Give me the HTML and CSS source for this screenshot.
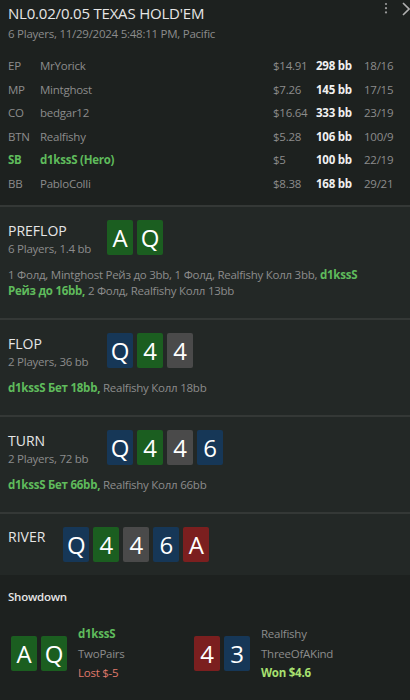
FILE: index.html
```html
<!DOCTYPE html>
<html lang="ru">
<head>
  <meta charset="UTF-8" />
  <meta name="viewport" content="width=device-width, initial-scale=1.0"/>
  <title>Hand - NL0.02/0.05</title>
  <link rel="stylesheet" href="styles.css">
</head>
<body>

  <div class="head">
    <div class="head-tools">
      <svg width="4" height="12" viewBox="0 0 4 12"><circle cx="2" cy="2" r="1.1" fill="#9a9a9a"/><circle cx="2" cy="6.2" r="1.1" fill="#9a9a9a"/><circle cx="2" cy="10.4" r="1.1" fill="#9a9a9a"/></svg>
      <svg width="10" height="14" viewBox="0 0 10 14"><path d="M3 1 L9 7 L3 13" fill="none" stroke="#b0b0b0" stroke-width="1.6"/></svg>
    </div>
    <h1>NL0.02/0.05 TEXAS HOLD'EM</h1>
    <div class="sub">6 Players, 11/29/2024 5:48:11 PM, Pacific</div>

    <div class="players">
      <span>EP</span><span>MrYorick</span><span>$14.91</span><span class="bb">298 bb</span><span>18/16</span>
      <span>MP</span><span>Mintghost</span><span>$7.26</span><span class="bb">145 bb</span><span>17/15</span>
      <span>CO</span><span>bedgar12</span><span>$16.64</span><span class="bb">333 bb</span><span>23/19</span>
      <span>BTN</span><span>Realfishy</span><span>$5.28</span><span class="bb">106 bb</span><span>100/9</span>
      <span class="hero">SB</span><span class="hero">d1kssS (Hero)</span><span>$5</span><span class="bb">100 bb</span><span>22/19</span>
      <span>BB</span><span>PabloColli</span><span>$8.38</span><span class="bb">168 bb</span><span>29/21</span>
    </div>
  </div>

  <div class="street">
    <div class="street-top">
      <div class="street-info">
        <div class="street-name">PREFLOP</div>
        <div class="street-sub">6 Players, 1.4 bb</div>
      </div>
      <div class="cards">
        <span class="card green">A</span><span class="card green">Q</span>
      </div>
    </div>
    <div class="actions">1 Фолд, Mintghost Рейз до 3bb, 1 Фолд, Realfishy Колл 3bb, <b>d1kssS Рейз до 16bb,</b> 2 Фолд, Realfishy Колл 13bb</div>
  </div>

  <div class="street">
    <div class="street-top">
      <div class="street-info">
        <div class="street-name">FLOP</div>
        <div class="street-sub">2 Players, 36 bb</div>
      </div>
      <div class="cards">
        <span class="card blue">Q</span><span class="card green">4</span><span class="card gray">4</span>
      </div>
    </div>
    <div class="actions"><b>d1kssS Бет 18bb,</b> Realfishy Колл 18bb</div>
  </div>

  <div class="street">
    <div class="street-top">
      <div class="street-info">
        <div class="street-name">TURN</div>
        <div class="street-sub">2 Players, 72 bb</div>
      </div>
      <div class="cards">
        <span class="card blue">Q</span><span class="card green">4</span><span class="card gray">4</span><span class="card blue">6</span>
      </div>
    </div>
    <div class="actions"><b>d1kssS Бет 66bb,</b> Realfishy Колл 66bb</div>
  </div>

  <div class="street river">
    <div class="street-top">
      <div class="street-name">RIVER</div>
      <div class="cards">
        <span class="card blue">Q</span><span class="card green">4</span><span class="card gray">4</span><span class="card blue">6</span><span class="card red">A</span>
      </div>
    </div>
  </div>

  <div class="showdown">
    <div class="showdown-title">Showdown</div>
    <div class="hands">
      <div class="hand">
        <div class="cards">
          <span class="card green">A</span><span class="card green">Q</span>
        </div>
        <div class="hand-info">
          <div class="hero-name">d1kssS</div>
          <div>TwoPairs</div>
          <div class="lost">Lost $-5</div>
        </div>
      </div>
      <div class="hand">
        <div class="cards">
          <span class="card red">4</span><span class="card blue">3</span>
        </div>
        <div class="hand-info">
          <div>Realfishy</div>
          <div>ThreeOfAKind</div>
          <div class="won">Won $4.6</div>
        </div>
      </div>
    </div>
  </div>

</body>
</html>
```

FILE: styles.css
```css
body {
  margin: 0;
  font-family: 'Open Sans', 'Noto Sans', sans-serif;
  background: #1d211f;
  color: #8c8c8c;
  font-size: 11.5px;
  letter-spacing: -0.25px;
  width: 410px;
  height: 700px;
  overflow: hidden;
}

.head {
  position: relative;
  padding: 5px 8px 10px;
  background: #1d211f;
}

.head-tools {
  position: absolute;
  top: 2px;
  right: 0;
  display: flex;
  align-items: flex-start;
  gap: 12px;
}

.head-tools svg { display: block; }

h1 {
  margin: 0;
  font-size: 15px;
  font-weight: normal;
  color: #e6e6e6;
  line-height: 16px;
  letter-spacing: -0.2px;
}

.sub {
  margin-top: 5px;
  line-height: 16px;
}

.players {
  margin-top: 12px;
  display: grid;
  grid-template-columns: 32px 233px 43px 48px auto;
  grid-auto-rows: 23.5px;
  align-items: center;
  white-space: nowrap;
}

.players .bb {
  color: #f0f0f0;
  font-weight: bold;
}

.players .hero {
  color: #5fbb5c;
  font-weight: bold;
}

.street {
  background: #232826;
  border-top: 2px solid #343836;
  padding: 13px 8px 19px;
}

.street-top {
  display: flex;
  align-items: flex-start;
  gap: 18px;
}

.street-info { width: 81px; }

.street-name {
  margin-top: 2px;
  font-size: 14px;
  color: #e6e6e6;
  line-height: 18px;
  letter-spacing: 0;
}

.street-sub {
  margin-top: 1px;
  line-height: 16px;
  white-space: nowrap;
}

.actions {
  margin-top: 10px;
  padding-right: 26px;
  line-height: 16px;
}

.actions b { color: #5fbb5c; }

.river { padding-bottom: 13px; }

.river .street-name { margin-top: 1px; }

.cards {
  display: flex;
  gap: 4px;
}

.card {
  width: 26px;
  height: 35px;
  border-radius: 2px;
  color: #fff;
  font-size: 24px;
  line-height: 35px;
  text-align: center;
  letter-spacing: 0;
}

.green { background: #1b5e20; }
.blue { background: #163757; }
.gray { background: #4a4a4a; }
.red { background: #7b1f1f; }

.showdown {
  padding: 14px 11px 0;
  background: #1d211f;
}

.showdown-title {
  margin-left: -3px;
  color: #e6e6e6;
  font-weight: 600;
  line-height: 16px;
}

.hands {
  display: flex;
  margin-top: 19px;
}

.hand {
  display: flex;
  align-items: center;
  gap: 11px;
  width: 183px;
}

.hand-info div {
  line-height: 19.5px;
}

.hero-name {
  color: #5fbb5c;
  font-weight: bold;
}

.lost { color: #e0796b; }

.won {
  color: #a8e070;
  font-weight: bold;
}
```
